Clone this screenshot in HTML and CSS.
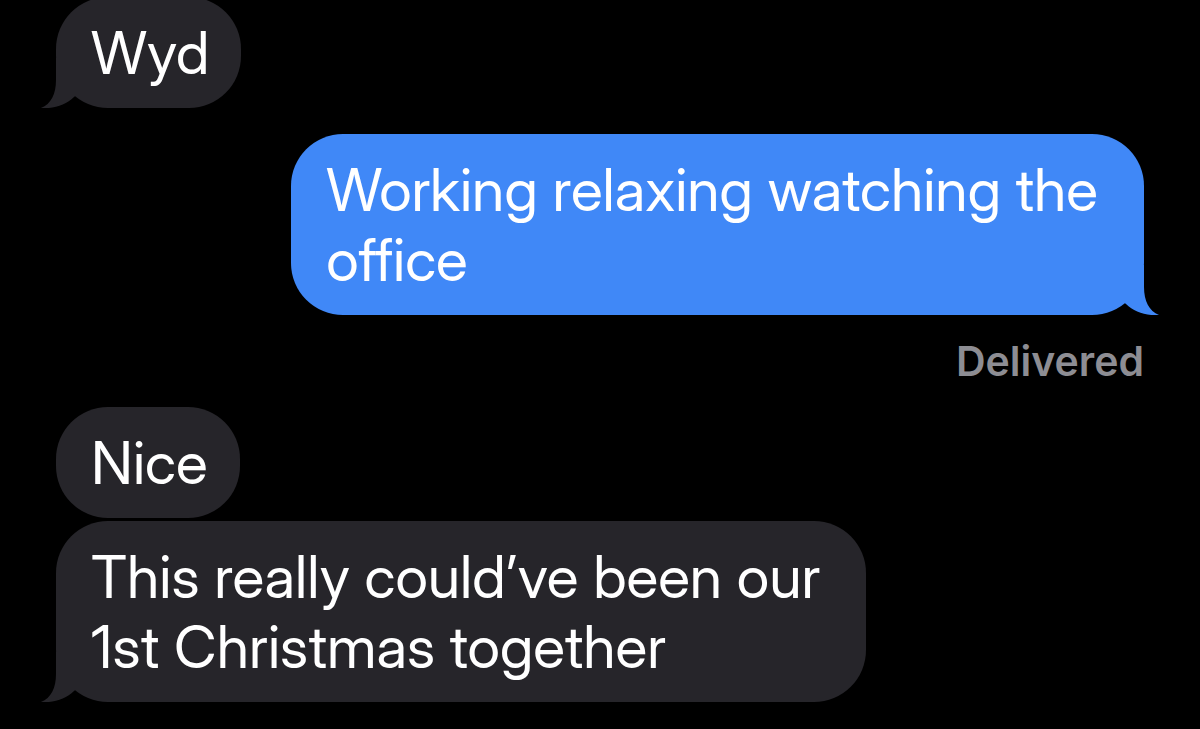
FILE: index.html
```html
<!DOCTYPE html>
<html lang="en">
<head>
  <meta charset="UTF-8">
  <meta name="viewport" content="width=device-width, initial-scale=1">
  <title>Messages</title>
  <link rel="stylesheet" href="styles.css">
</head>
<body>
  <main class="chat">
    <div class="bubble received">
      Wyd
      <svg class="tail" viewBox="0 0 40 50" aria-hidden="true"><path d="M16 0V22C16 36 11 46 1 50C14 51 26 47 34 39L40 34V0Z"/></svg>
    </div>

    <div class="bubble sent multiline">
      Working relaxing watching the<br>office
      <svg class="tail" viewBox="0 0 40 50" aria-hidden="true"><path d="M16 0V22C16 36 11 46 1 50C14 51 26 47 34 39L40 34V0Z"/></svg>
    </div>
    <div class="receipt">Delivered</div>

    <div class="bubble received">Nice</div>
    <div class="bubble received multiline">
      This really could’ve been our<br>1st Christmas together
      <svg class="tail" viewBox="0 0 40 50" aria-hidden="true"><path d="M16 0V22C16 36 11 46 1 50C14 51 26 47 34 39L40 34V0Z"/></svg>
    </div>
  </main>
</body>
</html>
```
FILE: styles.css
```css
:root {
  --received: #26252a;
  --sent: #4088f7;
  --receipt: #8d8d93;
}

body {
  margin: 0;
  background-color: #000;
  color: #fff;
  font-family: Inter, "Liberation Sans", sans-serif;
}

.chat {
  display: flex;
  flex-direction: column;
  align-items: flex-start;
  gap: 3px;
  margin-top: -3px;
  padding: 0 56px;
}

.bubble {
  position: relative;
  padding: 21px 32px 20px 35px;
  border-radius: 52px;
  font-family: "Inter Display", Inter, "Liberation Sans", sans-serif;
  font-size: 59px;
  line-height: 70px;
}

.multiline {
  padding-right: 46px;
}

.received {
  background-color: var(--received);
  fill: var(--received);
}

.sent {
  align-self: flex-end;
  margin-top: 23px;
  background-color: var(--sent);
  fill: var(--sent);
}

/* curls out of the bottom corner of the last bubble in a group */
.tail {
  position: absolute;
  bottom: 0;
  left: -16px;
  width: 40px;
  height: 50px;
}

.sent .tail {
  right: -16px;
  left: auto;
  transform: scaleX(-1);
}

.receipt {
  align-self: flex-end;
  margin: 19px 0;
  color: var(--receipt);
  font-size: 41px;
  font-weight: 600;
  line-height: 48px;
}
```
